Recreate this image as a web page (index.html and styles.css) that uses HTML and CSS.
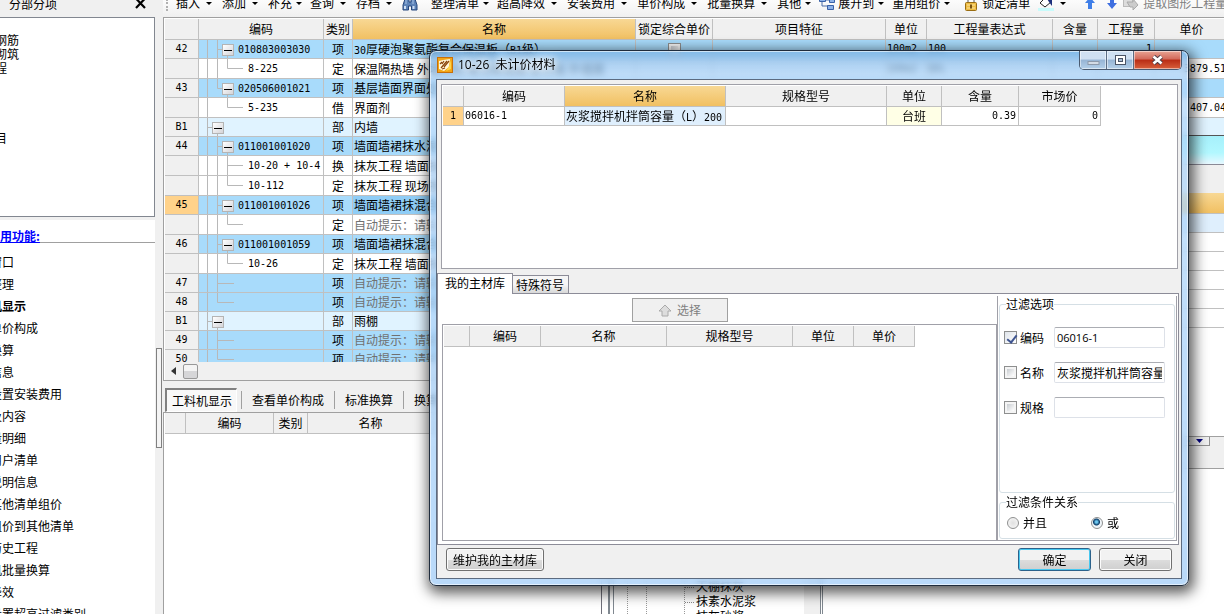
FILE: index.html
```html
<!DOCTYPE html>
<html lang="zh-CN">
<head>
<meta charset="utf-8">
<title>分部分项</title>
<link rel="stylesheet" href="styles.css">
</head>
<body>
<svg class="defs" aria-hidden="true">
  <symbol id="g-item" viewBox="0 0 48 20"><path d="M8.5 0V20M18.5 0V20M18.5 9.5H24M28.5 12V20"/></symbol>
  <symbol id="g-item-last" viewBox="0 0 48 20"><path d="M8.5 0V20M18.5 0V9.5H24M28.5 12V20"/></symbol>
  <symbol id="g-sub" viewBox="0 0 48 20"><path d="M8.5 0V20M18.5 0V20M28.5 0V9.5H44"/></symbol>
  <symbol id="g-sub-more" viewBox="0 0 48 20"><path d="M8.5 0V20M18.5 0V20M28.5 0V20M28.5 9.5H44"/></symbol>
  <symbol id="g-sub-end" viewBox="0 0 48 20"><path d="M8.5 0V20M28.5 0V9.5H44"/></symbol>
  <symbol id="g-part" viewBox="0 0 48 20"><path d="M8.5 0V20M8.5 9.5H14M18.5 12V20"/></symbol>
  <symbol id="g-empty" viewBox="0 0 48 20"><path d="M8.5 0V20M18.5 0V20M18.5 9.5H35"/></symbol>
  <symbol id="g-empty-last" viewBox="0 0 48 20"><path d="M8.5 0V20M18.5 0V9.5H35"/></symbol>
</svg>

<div class="app">
  <aside class="side">
    <div class="side-head"><span>分部分项</span><button class="side-close" aria-label="关闭面板"><svg width="11" height="11" viewBox="0 0 11 11"><path d="M1 0.500L10 10M10 0.500L1 10" stroke="#000" stroke-width="2.200"/></svg></button></div>
    <ul class="tree">
      <li>钢筋</li><li>砌筑</li><li>程</li><li></li><li></li><li></li><li></li><li>目</li>
    </ul>
    <nav class="funcs">
      <h2><a href="#">常用功能:</a></h2>
      <ul>
        <li><a href="#">窗口</a></li>
        <li><a href="#">整理</a></li>
        <li><a href="#" class="current">机显示</a></li>
        <li><a href="#">单价构成</a></li>
        <li><a href="#">换算</a></li>
        <li><a href="#">信息</a></li>
        <li><a href="#">设置安装费用</a></li>
        <li><a href="#">及内容</a></li>
        <li><a href="#">量明细</a></li>
        <li><a href="#">用户清单</a></li>
        <li><a href="#">说明信息</a></li>
        <li><a href="#">其他清单组价</a></li>
        <li><a href="#">组价到其他清单</a></li>
        <li><a href="#">历史工程</a></li>
        <li><a href="#">机批量换算</a></li>
        <li><a href="#">降效</a></li>
        <li><a href="#">设置超高过滤类别</a></li>
      </ul>
    </nav>
  </aside>
  <div class="splitter"><div class="grip"></div></div>

  <main class="main">
    <div class="toolbar">
      <i class="dots"></i>
      <button class="drop">插入</button>
      <button class="drop">添加</button>
      <button class="drop tight">补充</button>
      <button class="drop">查询</button>
      <button class="drop">存档</button>
      <button class="ico find" aria-label="查找"><svg width="16" height="16" viewBox="0 0 16 16"><path d="M3 4h4v3h2V4h4l2 6v5H9.500v-4h-3v4H1v-5z" fill="#5d83b8" stroke="#27477d"/><path d="M3 11v3M11.500 11v3" stroke="#cfe0f5" stroke-width="2"/><path d="M4 5v4M11 5v4" stroke="#a9c4e8"/></svg></button>
      <i class="sep"></i>
      <button class="drop tight">整理清单</button>
      <button class="drop">超高降效</button>
      <button class="drop">安装费用</button>
      <button class="drop">单价构成</button>
      <button class="drop">批量换算</button>
      <button class="drop tight">其他</button>
      <button class="drop tight"><svg width="16" height="16" viewBox="0 0 16 16"><path d="M3 6v5h6M5 5h6" stroke="#4c6ea8" fill="none"/><path d="M0.500 2.500h6v4h-6zM10.500 3.500h5v4h-5zM8.500 10.500h6v4h-6z" fill="#8db2e8" stroke="#3a62a8"/></svg>展开到</button>
      <button class="drop tight">重用组价</button>
      <i class="sep"></i>
      <button class="ico text"><svg width="14" height="16" viewBox="0 0 14 16"><path d="M4 8V4.500a3 3 0 0 1 6 0V8" fill="none" stroke="#a9a9a9" stroke-width="2"/><rect x="1.500" y="7.500" width="11" height="8" rx="1" fill="#eebd45" stroke="#9a6d12"/><path d="M3 10h8M3 13h8" stroke="#fbe3a0"/><path d="M7 9.500v4" stroke="#7b5410" stroke-width="2"/></svg>锁定清单</button>
      <button class="drop bucket" aria-label="填充颜色"><svg width="16" height="16" viewBox="0 0 16 16"><rect y="13" width="16" height="3" fill="#c8fbfb"/><path d="M2 8l6-6 5 5-6 5z" fill="#fff" stroke="#222"/><path d="M8 2l2-1 4 3 0 7-3-4z" fill="#1c2f7c"/></svg></button>
      <i class="sep"></i>
      <button class="ico up" aria-label="上移"><svg width="10" height="14" viewBox="0 0 10 14"><path d="M5 1l5 6H7v6H3V7H0z" fill="#3f7fe8"/></svg></button>
      <button class="ico down" aria-label="下移"><svg width="10" height="14" viewBox="0 0 10 14"><path d="M5 13l5-6H7V1H3v6H0z" fill="#3f6fe0"/></svg></button>
      <button class="ico text" disabled><svg width="16" height="16" viewBox="0 0 16 16"><rect x="0.500" y="2.500" width="9" height="9" fill="#ddd" stroke="#bbb"/><path d="M4 7h6V4l5 6-5 5v-3H7z" fill="#ccc" stroke="#aaa"/></svg>提取图形工程量</button>
    </div>

    <section class="sheet">
      <div class="sheet-view">
      <table class="grid bill">
        <colgroup><col class="w34"><col class="w125"><col class="w29"><col class="w283"><col class="w77"><col class="w173"><col class="w41"><col class="w126"><col class="w45"><col class="w57"><col></colgroup>
        <thead><tr><th></th><th>编码</th><th>类别</th><th class="hot">名称</th><th>锁定综合单价</th><th>项目特征</th><th>单位</th><th>工程量表达式</th><th>含量</th><th>工程量</th><th>单价</th></tr></thead>
        <tbody>
          <tr class="item"><th>42</th><td class="code"><div><svg class="guide"><use href="#g-item"/></svg><span class="l2"><button class="fold" aria-label="折叠"></button>010803003030</span></div></td><td class="kind">项</td><td><span class="num">30</span>厚硬泡聚氨酯复合保温板（<span class="num">B1</span>级）</td><td class="kind"><input type="checkbox" class="tick" aria-label="锁定综合单价"></td><td></td><td class="num">100m2</td><td class="num">100</td><td></td><td class="num right">1</td><td></td></tr>
          <tr class="sub"><th></th><td class="code"><div><svg class="guide"><use href="#g-sub"/></svg><span class="l3">8-225</span></div></td><td class="kind">定</td><td>保温隔热墙 外墙粘贴 硬泡聚氨酯 复合板 外墙面</td><td></td><td></td><td class="num">100m2</td><td class="num">QDL</td><td></td><td></td><td class="num right">3879.51</td></tr>
          <tr class="item"><th>43</th><td class="code"><div><svg class="guide"><use href="#g-item-last"/></svg><span class="l2"><button class="fold" aria-label="折叠"></button>020506001021</span></div></td><td class="kind">项</td><td>基层墙面界面处理</td><td></td><td></td><td></td><td></td><td></td><td></td><td></td></tr>
          <tr class="sub"><th></th><td class="code"><div><svg class="guide"><use href="#g-sub-end"/></svg><span class="l3">5-235</span></div></td><td class="kind">借</td><td>界面剂</td><td></td><td></td><td></td><td></td><td></td><td></td><td class="num right">407.04</td></tr>
          <tr class="part"><th>B1</th><td class="code"><div><svg class="guide"><use href="#g-part"/></svg><span class="l1"><button class="fold" aria-label="折叠"></button></span></div></td><td class="kind">部</td><td>内墙</td><td></td><td></td><td></td><td></td><td></td><td></td><td></td></tr>
          <tr class="item"><th>44</th><td class="code"><div><svg class="guide"><use href="#g-item"/></svg><span class="l2"><button class="fold" aria-label="折叠"></button>011001001020</span></div></td><td class="kind">项</td><td>墙面墙裙抹水泥砂浆</td><td></td><td></td><td></td><td></td><td></td><td></td><td></td></tr>
          <tr class="sub"><th></th><td class="code"><div><svg class="guide"><use href="#g-sub-more"/></svg><span class="l3">10-20 + 10-4</span></div></td><td class="kind">换</td><td>抹灰工程 墙面抹灰</td><td></td><td></td><td></td><td></td><td></td><td></td><td></td></tr>
          <tr class="sub"><th></th><td class="code"><div><svg class="guide"><use href="#g-sub"/></svg><span class="l3">10-112</span></div></td><td class="kind">定</td><td>抹灰工程 现场搅拌</td><td></td><td></td><td></td><td></td><td></td><td></td><td></td></tr>
          <tr class="item"><th class="picked">45</th><td class="code"><div><svg class="guide"><use href="#g-item"/></svg><span class="l2"><button class="fold" aria-label="折叠"></button>011001001026</span></div></td><td class="kind">项</td><td class="deep">墙面墙裙抹混合砂浆</td><td></td><td></td><td></td><td></td><td></td><td></td><td></td></tr>
          <tr class="sub"><th></th><td class="code"><div><svg class="guide"><use href="#g-sub"/></svg></div></td><td class="kind">定</td><td class="hint">自动提示：请输入</td><td></td><td></td><td></td><td></td><td></td><td></td><td></td></tr>
          <tr class="item"><th>46</th><td class="code"><div><svg class="guide"><use href="#g-item"/></svg><span class="l2"><button class="fold" aria-label="折叠"></button>011001001059</span></div></td><td class="kind">项</td><td>墙面墙裙抹混合砂浆</td><td></td><td></td><td></td><td></td><td></td><td></td><td></td></tr>
          <tr class="sub"><th></th><td class="code"><div><svg class="guide"><use href="#g-sub"/></svg><span class="l3">10-26</span></div></td><td class="kind">定</td><td>抹灰工程 墙面抹灰</td><td></td><td></td><td></td><td></td><td></td><td></td><td></td></tr>
          <tr class="item"><th>47</th><td class="code"><div><svg class="guide"><use href="#g-empty"/></svg></div></td><td class="kind">项</td><td class="hint">自动提示：请输入</td><td></td><td></td><td></td><td></td><td></td><td></td><td></td></tr>
          <tr class="item"><th>48</th><td class="code"><div><svg class="guide"><use href="#g-empty-last"/></svg></div></td><td class="kind">项</td><td class="hint">自动提示：请输入</td><td></td><td></td><td></td><td></td><td></td><td></td><td></td></tr>
          <tr class="part"><th>B1</th><td class="code"><div><svg class="guide"><use href="#g-part"/></svg><span class="l1"><button class="fold" aria-label="折叠"></button></span></div></td><td class="kind">部</td><td>雨棚</td><td></td><td></td><td></td><td></td><td></td><td></td><td></td></tr>
          <tr class="item"><th>49</th><td class="code"><div><svg class="guide"><use href="#g-empty"/></svg></div></td><td class="kind">项</td><td class="hint">自动提示：请输入</td><td></td><td></td><td></td><td></td><td></td><td></td><td></td></tr>
          <tr class="item"><th>50</th><td class="code"><div><svg class="guide"><use href="#g-empty-last"/></svg></div></td><td class="kind">项</td><td class="hint">自动提示：请输入</td><td></td><td></td><td></td><td></td><td></td><td></td><td></td></tr>
        </tbody>
      </table>
      </div>
      <div class="hscroll"><svg width="5" height="8" viewBox="0 0 5 8"><path d="M5 0v8L0 4z" fill="#333"/></svg><span class="thumb"></span></div>
    </section>

    <div class="subtabs">
      <button class="on">工料机显示</button><button>查看单价构成</button><button>标准换算</button><button>换算信息</button>
    </div>
    <section class="lower">
      <table class="grid res">
        <colgroup><col class="w21"><col class="w88"><col class="w34"><col class="w126"><col></colgroup>
        <thead><tr><th></th><th>编码</th><th>类别</th><th>名称</th><th></th></tr></thead>
      </table>
    </section>
  </main>
</div>

<div class="under">
  <div class="under-title"></div>
  <div class="under-bar"></div>
  <div class="under-body">
    <ul class="under-tree">
      <li>天棚抹灰</li><li>抹素水泥浆</li><li>抹灰砂浆</li>
    </ul>
    <div class="under-right">
      <div class="under-head"></div>
      <div class="under-row first"></div>
      <div class="under-row"></div><div class="under-row"></div><div class="under-row"></div><div class="under-row"></div><div class="under-row"></div>
      <div class="under-space"></div>
      <div class="under-split"><span>··<svg width="7" height="4" viewBox="0 0 7 4"><path d="M0 0h7L3.500 4z" fill="#000080"/></svg></span></div>
      <div class="under-foot"></div>
    </div>
  </div>
</div>

<div class="dialog" role="dialog" aria-labelledby="dlg-title">
  <header class="titlebar">
    <svg width="16" height="16" viewBox="0 0 16 16"><rect x="0.500" y="0.500" width="15" height="15" fill="#f2a515" stroke="#c96f08"/><path d="M2 4l4-1 7-1-1 8-5 4-5-2z" fill="#fff6d8"/><path d="M3 7l2-2M5 7l2-3M4 11l6-7M7 10l5-6M5 12l3-1" stroke="#8a450b" stroke-width="1.200"/><path d="M12 9l2-6v9l-5 2z" fill="#ffd54a"/></svg>
    <h1 id="dlg-title">10-26  未计价材料</h1>
    <div class="winbtns">
      <button class="min" aria-label="最小化"><svg width="13" height="13" viewBox="0 0 13 13"><rect x="1" y="7.500" width="11" height="3" fill="#d4dce6" stroke="#8d99aa"/></svg></button>
      <button class="max" aria-label="最大化"><svg width="13" height="13" viewBox="0 0 13 13"><rect x="1.500" y="1.500" width="10" height="9" fill="#fff" stroke="#4a5466"/><rect x="4.500" y="4.500" width="4" height="3" fill="#a8bcd4" stroke="#4a5466"/></svg></button>
      <button class="close" aria-label="关闭窗口"><svg width="13" height="12" viewBox="0 0 13 12"><path d="M2.500 2.500l8 7M10.500 2.500l-8 7" stroke="#51404a" stroke-width="4.500"/><path d="M2.500 2.500l8 7M10.500 2.500l-8 7" stroke="#fff" stroke-width="2.600"/></svg></button>
    </div>
  </header>
  <div class="client">
    <section class="box materials">
      <table class="grid">
        <colgroup><col class="w21"><col class="w101"><col class="w161"><col class="w161"><col class="w55"><col class="w77"><col class="w82"></colgroup>
        <thead><tr><th></th><th>编码</th><th class="hot">名称</th><th>规格型号</th><th>单位</th><th>含量</th><th>市场价</th></tr></thead>
        <tbody><tr><th class="picked">1</th><td class="num">06016-1</td><td class="sel">灰浆搅拌机拌筒容量（<span class="num">L</span>）<span class="num">200</span></td><td></td><td class="kind cream">台班</td><td class="num right">0.39</td><td class="num right">0</td></tr></tbody>
      </table>
    </section>
    <div class="tabs" role="tablist">
      <button role="tab" aria-selected="true">我的主材库</button><button role="tab">特殊符号</button>
    </div>
    <div class="page">
      <div class="library">
        <button class="pick" disabled><svg width="14" height="13" viewBox="0 0 14 13"><path d="M7 1l6 6h-3v5H4V7H1z" fill="#ddd" stroke="#aaa"/></svg>选择</button>
        <div class="box list">
          <table class="grid">
            <colgroup><col class="w26"><col class="w71"><col class="w126"><col class="w126"><col class="w61"><col class="w61"></colgroup>
            <thead><tr><th></th><th>编码</th><th>名称</th><th>规格型号</th><th>单位</th><th>单价</th></tr></thead>
          </table>
        </div>
      </div>
      <form class="filter">
        <fieldset class="opts">
          <legend>过滤选项</legend>
          <div class="field"><label><input type="checkbox" class="tick" checked>编码</label><input type="text" class="latin" value="06016-1" aria-label="编码"></div>
          <div class="field"><label><input type="checkbox" class="tick">名称</label><input type="text" value="灰浆搅拌机拌筒容量" aria-label="名称"></div>
          <div class="field"><label><input type="checkbox" class="tick">规格</label><input type="text" value="" aria-label="规格"></div>
        </fieldset>
        <fieldset class="rel">
          <legend>过滤条件关系</legend>
          <label><input type="radio" name="rel">并且</label>
          <label><input type="radio" name="rel" checked>或</label>
        </fieldset>
      </form>
    </div>
    <footer class="foot">
      <button class="btn wide">维护我的主材库</button>
      <button class="btn ok">确定</button>
      <button class="btn">关闭</button>
    </footer>
  </div>
</div>
</body>
</html>
```

FILE: styles.css
```css
* { box-sizing: border-box; }
html, body { height: 100%; }
body {
  margin: 0;
  overflow: hidden;
  position: relative;
  background: #f0f0f0;
  color: #000;
  font: 12px/18px "Noto Sans CJK SC", sans-serif;
}
button, input { font: inherit; color: inherit; }
button { padding: 0; border: 0; background: none; white-space: nowrap; }
ul { list-style: none; margin: 0; padding: 0; }
h1, h2 { margin: 0; font: inherit; }
a { color: inherit; text-decoration: none; }
svg { flex: none; }
.defs { position: absolute; width: 0; height: 0; }

.app { display: grid; grid-template-columns: 155px 8px minmax(0, 1fr); height: 100%; }

/* left column */
.side { display: flex; flex-direction: column; min-height: 0; overflow: hidden; }
.side-head { display: flex; justify-content: space-between; align-items: center; height: 17px; padding: 0 9px 10px; line-height: 8px; }
.side-close { display: flex; }
.tree { height: 200px; padding-top: 15px; border: 1px solid #828790; border-left: 0; background: #fff; }
.tree li { height: 14px; margin-left: -5px; line-height: 14px; }
.funcs { flex: 1; margin-top: 3px; padding-top: 7px; background: #fff; white-space: nowrap; min-height: 0; }
.funcs h2 { height: 16px; line-height: 18px; border-bottom: 1px solid #a0a0a0; font-weight: bold; color: #00f; text-indent: -12px; }
.funcs h2 a { text-decoration: underline; }
.funcs ul { padding-top: 8px; margin-left: -10px; }
.funcs li { line-height: 22px; }
.current { font-weight: bold; }
.splitter { padding: 348px 1px 0; }
.grip { width: 6px; height: 100px; border: 1px solid #808080; background: #f4f4f4; }

/* toolbar */
.main { display: flex; flex-direction: column; min-width: 0; min-height: 0; }
.toolbar { display: flex; align-items: flex-end; height: 17px; padding-left: 3px; overflow: hidden; background: linear-gradient(#fcfcfc, #f0f0f0); }
.toolbar button { display: flex; flex: none; align-items: center; height: 18px; margin-bottom: 5px; }
.drop { gap: 5px; padding-right: 10px; }
.drop::after { content: ""; border: 3px solid transparent; border-top-color: #000; border-bottom: 0; margin-left: 1px; }
.drop.tight { gap: 3px; padding-right: 8px; }
.toolbar .bucket { padding-right: 13px; }
.toolbar .text { gap: 4px; padding-right: 8px; }
.toolbar .find { padding-right: 7px; }
.toolbar .up { padding-right: 12px; }
.toolbar .down { padding-right: 6px; }
.toolbar button:disabled { color: #808080; }
.dots { width: 2px; height: 12px; margin: 0 8px 6px 0; border-left: 2px dotted #b0b0b0; }
.sep { width: 1px; height: 12px; margin: 0 6px 5px 0; background: #b4b4b4; }

/* grids */
.grid { border-collapse: separate; border-spacing: 0; table-layout: fixed; width: 0; }
.grid th, .grid td {
  height: 19px;
  padding: 0 2px 0 1px;
  border: 0 solid #c0c0c0;
  border-width: 0 1px 1px 0;
  overflow: hidden;
  white-space: nowrap;
  text-align: left;
  font-weight: normal;
  line-height: 18px;
}
.grid thead th { height: 21px; padding: 0; background: #f0f0f0; text-align: center; line-height: 20px; }
.grid tbody th { padding: 0; background: #f0f0f0; text-align: center; font: 10px/18px "DejaVu Sans Mono", monospace; }
.grid thead .hot { background: linear-gradient(#f8d894, #f1c062); }
.grid tbody .picked { background: #ffd28a; }
.grid .kind { text-align: center; padding: 0; }
.grid .right { text-align: right; }
.num, .code { font-family: "DejaVu Sans Mono", "Noto Sans CJK SC", monospace; font-size: 10px; }
.grid td span.num { line-height: 10px; }
.grid .tick { display: block; margin: 2px auto; }
.grid .hint { color: #707070; }
.grid .sel { background: #dfeffd; }
.grid .cream { background: #ffffe6; }
.w21 { width: 21px; } .w26 { width: 26px; } .w29 { width: 29px; } .w34 { width: 34px; }
.w41 { width: 41px; } .w45 { width: 45px; } .w55 { width: 55px; } .w57 { width: 57px; }
.w61 { width: 61px; } .w71 { width: 71px; } .w77 { width: 77px; } .w82 { width: 82px; }
.w88 { width: 88px; } .w101 { width: 101px; } .w125 { width: 125px; } .w126 { width: 126px; }
.w161 { width: 161px; } .w173 { width: 173px; } .w283 { width: 283px; }

.sheet { flex: none; border: 1px solid #a0a0a0; border-right: 0; background: #fff; padding: 1px 0 0 1px; }
.sheet-view { height: 343px; overflow: hidden; }
.bill { width: 100%; min-width: 1064px; }
.item td { background: #a8dbfb; }
.part td { background: #e0f3ff; }
.item .deep { background: #8fcdf6; }
.bill .sub td, .bill .sub th { height: 20px; }
.grid .code { padding: 0; }
.code div { display: grid; align-items: center; height: 18px; }
.sub .code div { height: 19px; }
.guide { grid-area: 1 / 1; align-self: start; width: 48px; height: 20px; fill: none; stroke: #b8b8b8; }
.code span { grid-area: 1 / 1; display: flex; align-items: center; gap: 4px; }
.l1 { padding-left: 13px; }
.l2 { padding-left: 23px; }
.l3 { padding-left: 49px; }
.fold { width: 12px; height: 12px; border: 1px solid #b4b4b4; background: linear-gradient(#000, #000) center / 8px 1px no-repeat, linear-gradient(135deg, #fff, #d4d4d8); }
.hscroll { display: flex; align-items: center; gap: 7px; height: 18px; padding-left: 6px; background: #f0f0f0; }
.thumb { width: 15px; height: 15px; border: 1px solid #989898; border-radius: 2px; background: linear-gradient(#f4f4f4 50%, #d6d6d8 50%); }

.subtabs { display: flex; align-items: center; flex: none; height: 31px; padding: 7px 0 0 2px; }
.subtabs button { height: 18px; padding: 0 10px; border-left: 1px solid #a0a0a0; }
.subtabs .on { height: 24px; margin-right: 4px; padding: 0 4px 0 5px; border: 1px solid #fff; border-top: 2px solid #808080; border-left: 2px solid #808080; background: #f8f8f8; }
.lower { flex: 1; min-height: 0; padding: 0 0 0 1px; border: 1px solid #a0a0a0; border-width: 1px 0 0 1px; background: #fff; }
.res { width: 100%; }

/* query window lying behind the dialog */
.under { position: absolute; left: 601px; top: 135px; right: 0; bottom: 0; display: flex; flex-direction: column; border-left: 1px solid #70707a; background: #fff; }
.under-title { flex: none; height: 29px; border-top: 1px solid #555; background: linear-gradient(#a6f0fb, #b2f8ff 60%, #e8f8ff); }
.under-bar { flex: none; height: 29px; border-top: 1px solid #8a8a96; background: #f0f0f0; }
.under-body { flex: 1; display: flex; min-height: 0; }
.under-tree {
  align-self: stretch; display: flex; flex-direction: column; justify-content: flex-end;
  width: 215px; margin-left: 6px; padding-left: 86px;
  border-left: 2px solid #808890; border-right: 3px double #808890;
  overflow: hidden;
  background:
    linear-gradient(#808890, #808890) 3px 0 / 1px 100% no-repeat,
    linear-gradient(#f0f0f0, #f0f0f0) right / 16px 100% no-repeat,
    repeating-linear-gradient(#999 0 1px, transparent 1px 2px) 17px 0 / 1px 100% no-repeat,
    repeating-linear-gradient(#999 0 1px, transparent 1px 2px) 36px 0 / 1px 100% no-repeat,
    repeating-linear-gradient(#999 0 1px, transparent 1px 2px) 74px 0 / 1px 100% no-repeat;
}
.under-tree li { flex: none; height: 15px; line-height: 15px; white-space: nowrap; }
.under-tree li::before { content: ""; display: inline-block; width: 9px; margin: 0 2px 0 -11px; border-top: 1px dotted #888; vertical-align: middle; }
.under-tree li:last-child { margin-bottom: -9px; }
.under-right { flex: 1; display: flex; flex-direction: column; }
.under-head { height: 21px; border-bottom: 1px solid #c0c0c0; background: linear-gradient(#f8d894, #f1c062); }
.under-row { height: 19px; border-bottom: 1px solid #c0c0c0; }
.under-row.first { background: #dfeffd; }
.under-space { height: 108px; }
.under-split { display: flex; justify-content: flex-end; height: 12px; padding-right: 14px; border-top: 1px solid #a0a0a0; background: #f0f0f0; }
.under-split span { display: flex; align-items: center; gap: 3px; height: 9px; padding: 0 6px 0 3px; border: 1px solid #909090; border-top: 0; font-size: 10px; line-height: 8px; color: #000080; }
.under-foot { height: 21px; border-bottom: 1px solid #a0a0a0; background: #f0f0f0; }

/* dialog */
.dialog {
  position: absolute; left: 429px; top: 50px; width: 760px; height: 536px;
  display: flex; flex-direction: column;
  padding: 0 6px 6px;
  border: 1px solid #1f2c3d;
  border-radius: 7px;
  background: linear-gradient(rgba(120, 176, 226, .75), rgba(176, 214, 250, .72) 28px, rgba(168, 208, 248, .8));
  backdrop-filter: blur(3px);
  box-shadow: inset 0 0 0 1px rgba(255, 255, 255, .6), 2px 4px 14px 3px rgba(0, 0, 0, .65);
}
.titlebar { display: flex; align-items: center; flex: none; gap: 5px; height: 28px; padding-left: 1px; }
.titlebar h1 { flex: 1; white-space: pre; font: 12px/18px "Open Sans", "Noto Sans CJK SC", sans-serif; text-shadow: 0 0 6px #fff, 0 0 8px #fff, 0 0 12px #fff; }
.winbtns { display: flex; align-self: flex-start; height: 19px; border: 1px solid #4a5a70; border-top: 0; border-radius: 0 0 5px 5px; overflow: hidden; }
.winbtns button { display: flex; align-items: center; justify-content: center; width: 27px; border-right: 1px solid #5c6d84; box-shadow: inset 0 0 0 1px rgba(255, 255, 255, .5); background: linear-gradient(#cfe0f2 45%, #96b4d4 50%, #b4d0ea); }
.winbtns .close { width: 47px; border-right: 0; background: linear-gradient(#e8a494, #d2695a 45%, #b92c14 50%, #d8603c); }
.client { flex: 1; display: flex; flex-direction: column; min-height: 0; border: 1px solid #5c6b80; background: #f0f0f0; }
.box { border: 1px solid #a0a0a8; padding: 1px; background: #fff; overflow: hidden; }
.materials { flex: none; height: 185px; margin: 4px 3px 0 4px; }
.materials .grid thead th { height: 20px; }
.tabs { display: flex; align-items: flex-end; flex: none; height: 21px; margin-top: 3px; }
.tabs button { height: 18px; padding: 0 4px 0 3px; border: 1px solid #8c8c98; border-left: 0; border-bottom: 0; background: linear-gradient(#f6f6f6 50%, #d8d8d8); }
.tabs button[aria-selected] { height: 21px; margin-bottom: -1px; padding: 0 7px 3px; border-left: 1px solid #8c8c98; background: #fff; z-index: 1; }
.page { flex: 1; display: flex; min-height: 0; margin-right: 2px; padding: 2px 1px 3px 4px; border: 1px solid #8c8c98; background: #fff; }
.library { flex: 1; display: flex; flex-direction: column; min-width: 0; padding-top: 2px; }
.pick { display: flex; align-items: center; justify-content: center; gap: 5px; align-self: center; flex: none; width: 96px; height: 24px; margin: 0 0 2px -80px; border: 1px solid #a0a0a0; background: #f0f0f0; color: #808080; }
.list { flex: 1; }
.filter { display: flex; flex-direction: column; gap: 1px; width: 180px; padding: 0 1px 1px 1px; border: 1px solid #a0a0a8; border-width: 0 1px 1px; }
fieldset { min-width: 0; margin: 0; padding: 0 4px; border: 1px solid #d5dfe5; border-radius: 3px; }
legend { margin-left: 2px; padding: 0; line-height: 16px; }
.opts { flex: 1; }
.opts legend { margin-bottom: 15px; }
.field { display: flex; justify-content: space-between; align-items: center; height: 21px; margin-bottom: 14px; padding-right: 5px; }
.field label, .rel label { display: flex; align-items: center; gap: 3px; }
.field input[type="text"] { width: 111px; height: 21px; padding: 0 2px; border: 1px solid #dde1e8; border-top-color: #abadb3; border-radius: 2px; background: #fff; }
.field .latin { font-family: "Open Sans", sans-serif; font-size: 11px; }
.tick { appearance: none; width: 13px; height: 13px; margin: 0; border: 1px solid #8e8f8f; background: linear-gradient(135deg, #c8ccd0, #fff) center / 7px 7px no-repeat, #f4f4f4; vertical-align: middle; }
.tick:checked { background: linear-gradient(135deg, #dfe4ea, #fff); position: relative; }
.tick:checked::after { content: ""; position: absolute; left: 4px; top: 1px; width: 4px; height: 8px; border: solid #3f5591; border-width: 0 2px 2px 0; transform: rotate(38deg); }
.rel { display: flex; gap: 44px; height: 45px; padding: 5px 4px 0 7px; }
.rel legend { margin-left: -1px; }
.rel label { gap: 4px; line-height: 16px; height: 16px; }
.rel input { appearance: none; width: 12px; height: 12px; margin: 0; border: 1px solid #8e8f8f; border-radius: 50%; background: radial-gradient(#e0e0e0, #fafafa); }
.rel input:checked { background: radial-gradient(circle at 45% 40%, #6cc8f0 0 1px, #0b3c68 3px, #eef4f8 4px); }
.foot { display: flex; align-items: center; flex: none; gap: 8px; height: 33px; padding: 0 9px 4px; }
.btn { width: 73px; height: 23px; border: 1px solid #707070; border-radius: 3px; box-shadow: inset 0 0 0 1px #fcfcfc; background: linear-gradient(#f2f2f2 50%, #dddddd 50%, #cfcfcf); }
.btn.wide { width: 98px; margin-right: auto; }
.btn.ok { border-color: #2c628b; box-shadow: inset 0 0 0 1px #48c8f0; }
```
